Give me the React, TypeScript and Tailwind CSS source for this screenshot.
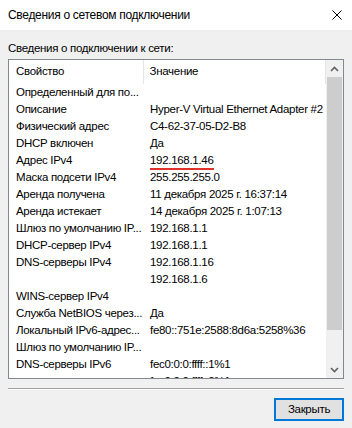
import React from 'react';

const rows: { prop: string; value: string; mark?: boolean }[] = [
  { prop: 'Определенный для по...', value: '' },
  { prop: 'Описание', value: 'Hyper-V Virtual Ethernet Adapter #2' },
  { prop: 'Физический адрес', value: 'C4-62-37-05-D2-B8' },
  { prop: 'DHCP включен', value: 'Да' },
  { prop: 'Адрес IPv4', value: '192.168.1.46', mark: true },
  { prop: 'Маска подсети IPv4', value: '255.255.255.0' },
  { prop: 'Аренда получена', value: '11 декабря 2025 г. 16:37:14' },
  { prop: 'Аренда истекает', value: '14 декабря 2025 г. 1:07:13' },
  { prop: 'Шлюз по умолчанию IP...', value: '192.168.1.1' },
  { prop: 'DHCP-сервер IPv4', value: '192.168.1.1' },
  { prop: 'DNS-серверы IPv4', value: '192.168.1.16' },
  { prop: '', value: '192.168.1.6' },
  { prop: 'WINS-сервер IPv4', value: '' },
  { prop: 'Служба NetBIOS через...', value: 'Да' },
  { prop: 'Локальный IPv6-адрес...', value: 'fe80::751e:2588:8d6a:5258%36' },
  { prop: 'Шлюз по умолчанию IP...', value: '' },
  { prop: 'DNS-серверы IPv6', value: 'fec0:0:0:ffff::1%1' },
  { prop: '', value: 'fec0:0:0:ffff::2%1' },
];

function Chevron({ up }: { up?: boolean }) {
  return (
    <svg width="9" height="6" viewBox="0 0 9 6" className={up ? '' : 'rotate-180'}>
      <path d="M1 5 L4.5 1.5 L8 5" fill="none" stroke="#606060" strokeWidth="1.6" />
    </svg>
  );
}

export default function App() {
  return (
    <div
      className="w-[352px] h-[428px] bg-[#f0f0f0] flex flex-col text-[11.5px] tracking-[-0.3px] text-black overflow-hidden"
      style={{ fontFamily: '"Liberation Sans", Arial, sans-serif' }}
    >
      {/* Title bar */}
      <div className="h-[30px] bg-white flex items-center justify-between pl-2 pr-[5px] shrink-0">
        <span className="leading-[16px] text-[12px]">Сведения о сетевом подключении</span>
        <svg width="10" height="10" viewBox="0 0 10 10" className="mr-[5px]">
          <path d="M0.5 0.5 L9.5 9.5 M9.5 0.5 L0.5 9.5" stroke="#000" strokeWidth="1" />
        </svg>
      </div>

      <div className="flex flex-col px-2 pt-[10px]">
        <div className="leading-[16px]">Сведения о подключении к сети:</div>

        {/* List view */}
        <div className="mt-[3px] h-[320px] border border-[#828790] bg-white flex overflow-hidden">
          <div className="flex-1 flex flex-col overflow-hidden">
            <div className="h-[24px] shrink-0 flex items-center">
              <div className="w-[134px] pl-[7px]">Свойство</div>
              <div className="w-px h-full bg-[#e5e5e5]" />
              <div className="w-[182px] pl-[6px]">Значение</div>
              <div className="w-px h-full bg-[#e5e5e5]" />
            </div>
            <div className="flex flex-col">
              {rows.map((r, i) => (
                <div key={i} className="h-[17px] shrink-0 flex items-center whitespace-nowrap">
                  <div className="w-[135px] shrink-0 pl-[7px] overflow-hidden">{r.prop}</div>
                  <div className="pl-[6px] relative">
                    {r.value}
                    {r.mark && (
                      <span className="absolute left-[6px] right-0 -bottom-[1px] h-[2px] bg-[#e0312b]" />
                    )}
                  </div>
                </div>
              ))}
            </div>
          </div>

          {/* Scrollbar */}
          <div className="w-[17px] shrink-0 bg-[#f0f0f0] flex flex-col">
            <div className="h-[17px] flex items-center justify-center">
              <Chevron up />
            </div>
            <div className="h-[253px] bg-[#cdcdcd] mx-px" />
            <div className="flex-1" />
            <div className="h-[17px] flex items-center justify-center">
              <Chevron />
            </div>
          </div>
        </div>

        {/* Separator */}
        <div className="mt-[9px] h-px bg-[#a0a0a0]" />
        <div className="h-px bg-white" />

        <div className="flex justify-end mt-[8px]">
          <button className="w-[70px] h-[23px] border-2 border-[#0078d7] bg-[#e1e1e1] flex items-center justify-center leading-none">
            Закрыть
          </button>
        </div>
      </div>
    </div>
  );
}
